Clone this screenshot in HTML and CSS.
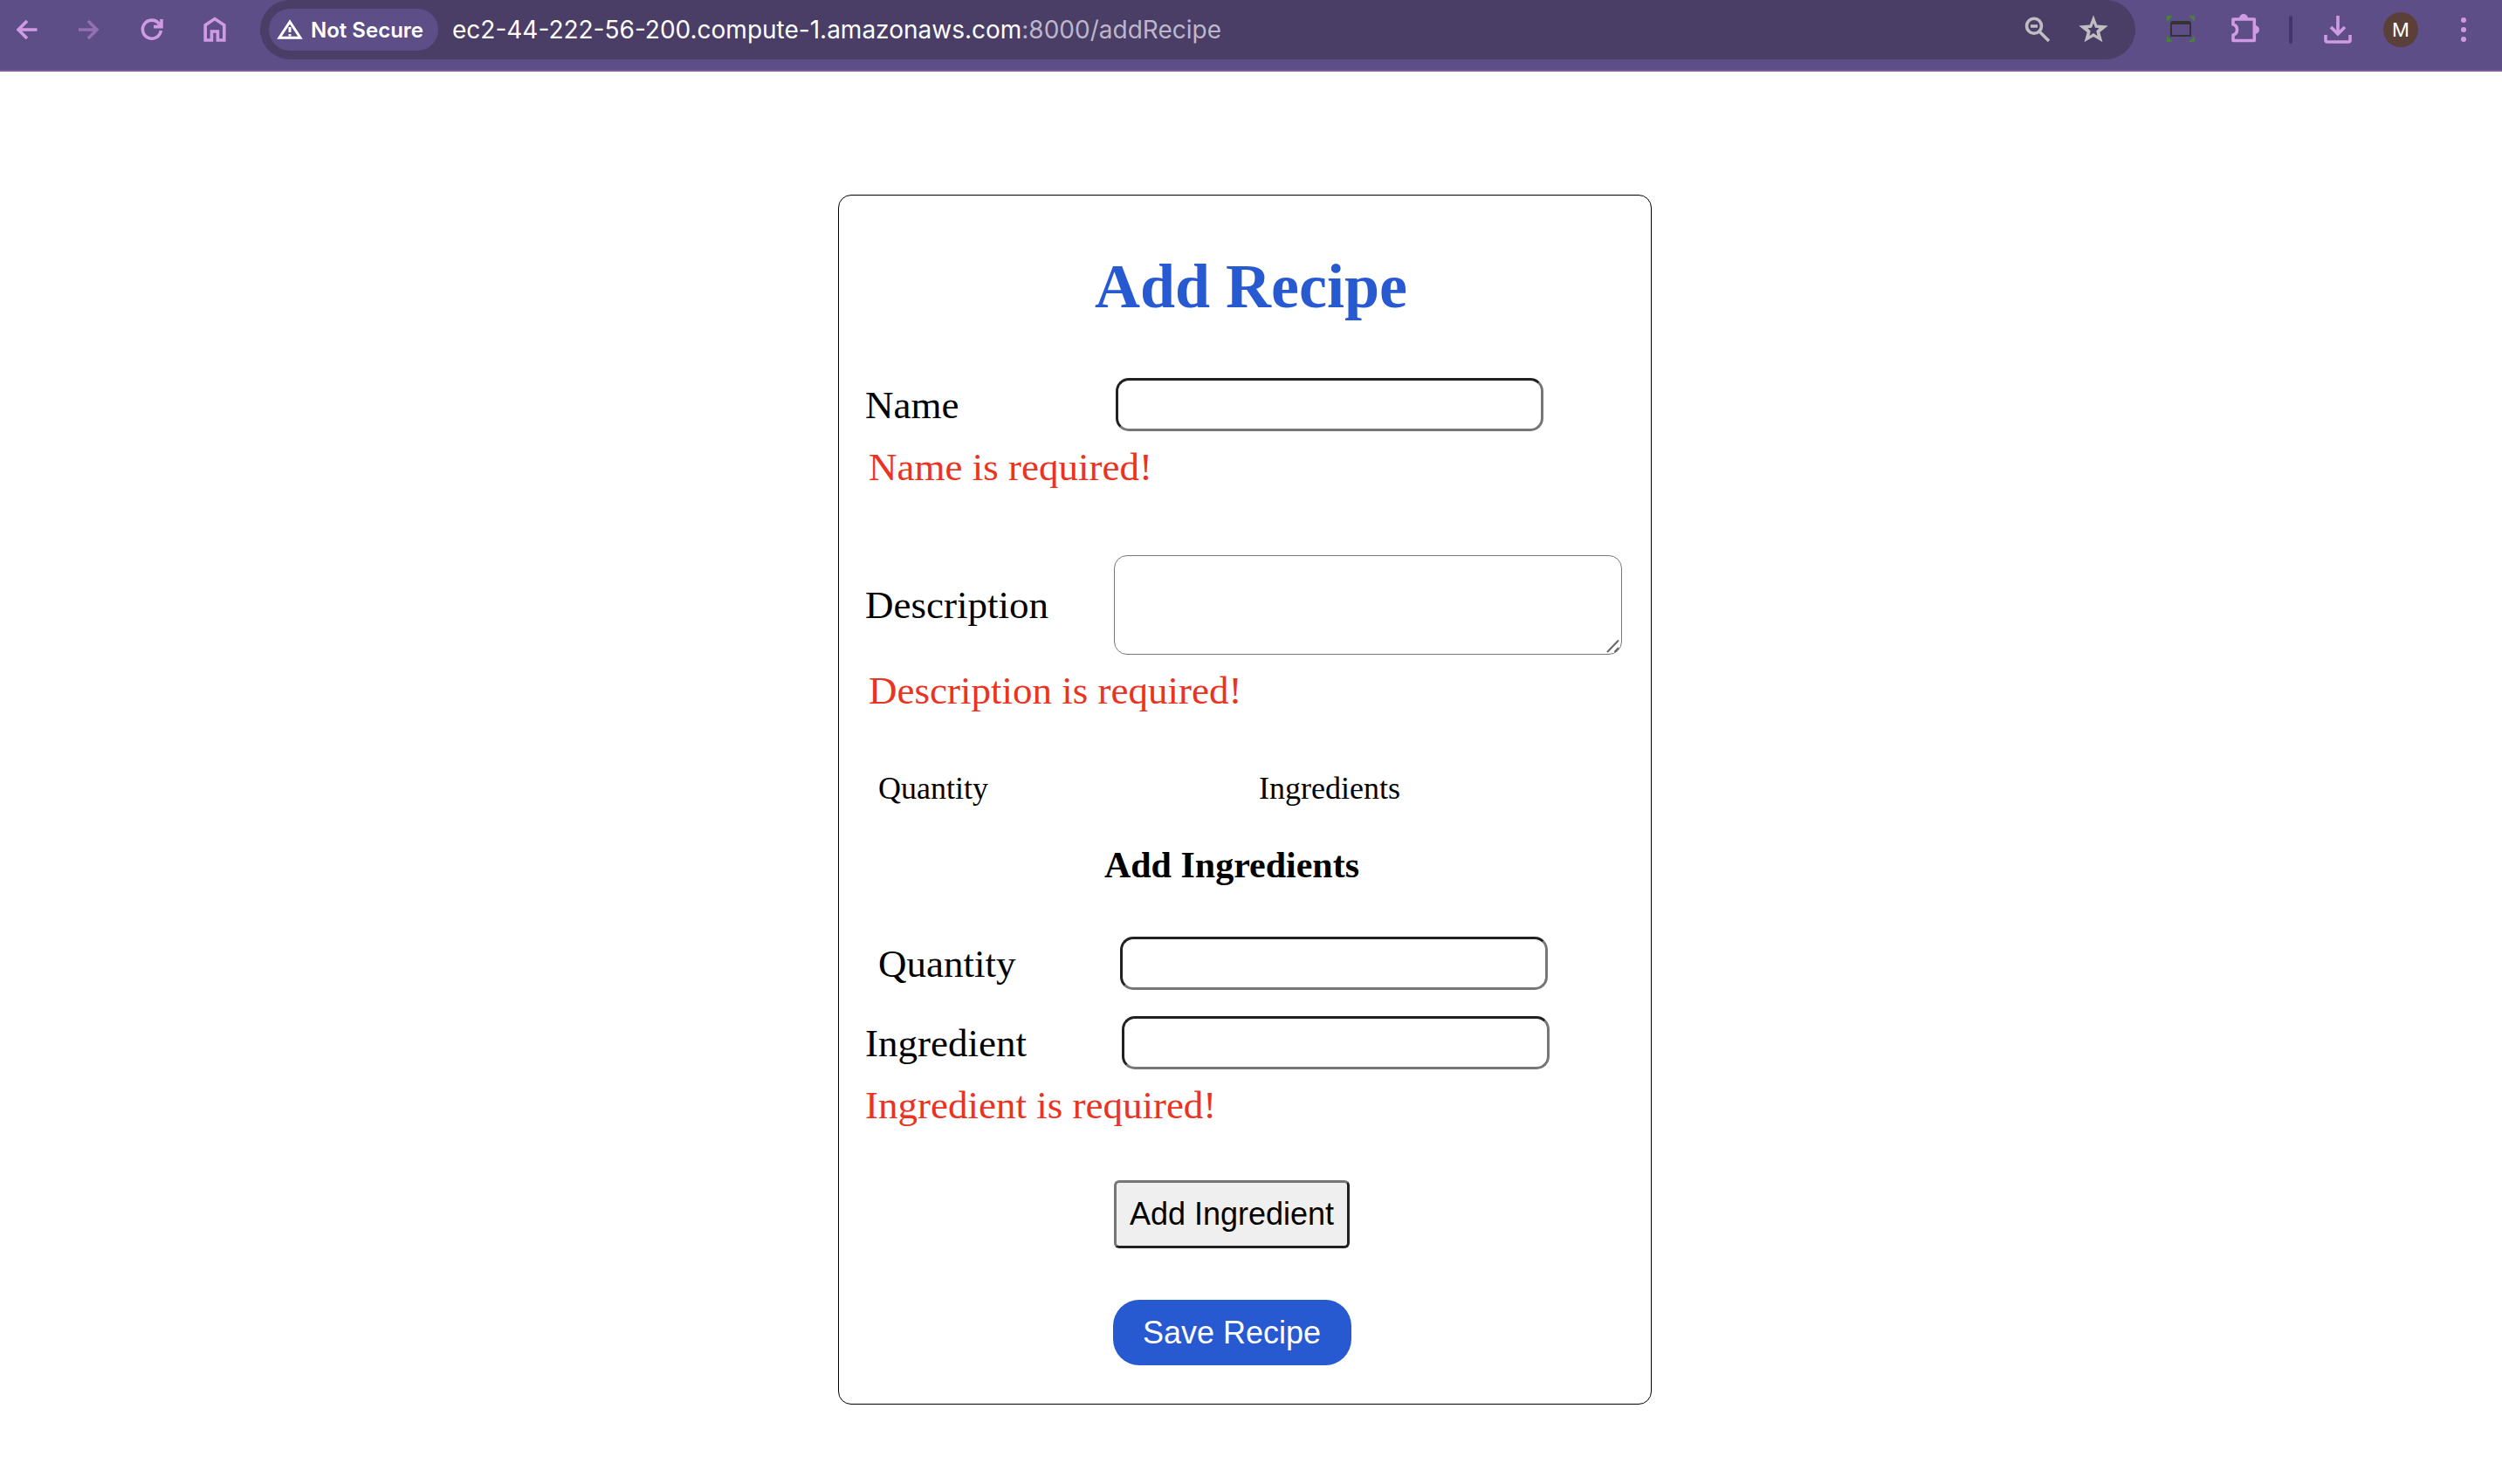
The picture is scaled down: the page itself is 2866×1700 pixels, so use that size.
FILE: index.html
```html
<!DOCTYPE html>
<html lang="en">
<head>
<meta charset="utf-8">
<title>Add Recipe</title>
<link rel="stylesheet" href="styles.css">
</head>
<body>
<header class="toolbar">
  <nav class="nav" aria-label="Browser navigation">
    <button class="icon-btn" aria-label="Back"><svg viewBox="0 0 32 32"><path d="M28.500 16H7M17 6L7 16l10 10"/></svg></button>
    <button class="icon-btn dim" aria-label="Forward"><svg viewBox="0 0 32 32"><path d="M4 16h21M15 6l10 10-10 10"/></svg></button>
    <button class="icon-btn" aria-label="Reload"><svg viewBox="0 0 32 32"><path d="M26.300 17A10.500 10.500 0 1 1 24 9M27 4v8.600H18"/><path class="solid" d="M27 6v7h-7z"/></svg></button>
    <button class="icon-btn" aria-label="Home"><svg viewBox="0 0 32 32"><path d="M5.200 28V10.800L16 3.600l10.800 7.200V28h-7.400V18h-6.900v10z"/></svg></button>
  </nav>
  <div class="address">
    <button class="chip"><svg viewBox="0 0 32 28"><path d="M16 5L4 23.300h24z"/><path d="M16 11v6M16 19v2.500"/></svg>Not Secure</button>
    <a class="url" href="#">ec2-44-222-56-200.compute-1.amazonaws.com<span class="path">:8000/addRecipe</span></a>
    <button class="icon-btn grey" aria-label="Zoom"><svg viewBox="0 0 32 32"><circle cx="12" cy="11.700" r="8.500"/><path d="M18 18l11 11M8 12h8"/></svg></button>
    <button class="icon-btn grey" aria-label="Bookmark"><svg viewBox="0 0 32 32"><path class="solid" fill-rule="evenodd" d="M16-.7l4.200 11.200 12.500 1.100L23.300 19l3.200 11.300L16 24 5.500 30.300 8.700 19-.7 11.600l12.500-1.100zM16 8.500l-2 5.200-4.500.5 3.200 3.300L11.500 23l4.500-3 4.500 3-1.200-5.500 3.200-3.300-4.500-.5z"/></svg></button>
  </div>
  <div class="tools">
    <button class="icon-btn" aria-label="Capture"><svg viewBox="0 0 32 32"><path class="corner" d="M0 0h7L0 7zM32 0h-7l7 7zM0 30h7l-7-7zM32 30h-7l7-7z"/><path class="frame" fill-rule="evenodd" d="M6 6h20l2 2v16H4V8zM6 10v12h20V10z"/></svg></button>
    <button class="icon-btn" aria-label="Extensions"><svg viewBox="0 0 32 32"><path stroke-linejoin="round" d="M2 10V4h24.300v24.500H2V22q4.500-1 4.500-6T2 10z"/><path class="solid" d="M9 3a5 5 0 0 1 10 0zM27 11a5 5 0 0 1 0 10z"/></svg></button>
    <span class="divider"></span>
    <button class="icon-btn" aria-label="Downloads"><svg viewBox="0 0 32 32"><path d="M16 0v21M8 13l8 8 8-8M2 22v6q0 2 2 2h24q2 0 2-2v-6"/></svg></button>
    <button class="avatar" aria-label="Profile M">M</button>
    <button class="icon-btn" aria-label="Menu"><svg viewBox="0 0 32 32"><g class="solid"><circle cx="16" cy="5" r="3"/><circle cx="16" cy="16" r="3"/><circle cx="16" cy="27" r="3"/></g></svg></button>
  </div>
</header>
<main class="page">
  <form class="card" novalidate>
    <h1>Add Recipe</h1>
    <div class="row">
      <label for="name">Name</label>
      <input id="name" type="text">
    </div>
    <p class="error">Name is required!</p>
    <div class="row row-desc">
      <label for="description">Description</label>
      <div class="area">
        <textarea id="description"></textarea>
        <svg class="grip" viewBox="0 0 18 18" aria-hidden="true"><path d="M1 15L14 1.500M9.500 15l4.500-5"/></svg>
      </div>
    </div>
    <p class="error">Description is required!</p>
    <table class="list">
      <thead><tr><th scope="col">Quantity</th><th scope="col">Ingredients</th></tr></thead>
    </table>
    <h2>Add Ingredients</h2>
    <div class="row inset">
      <label for="quantity">Quantity</label>
      <input id="quantity" type="text">
    </div>
    <div class="row inset-field">
      <label for="ingredient">Ingredient</label>
      <input id="ingredient" type="text">
    </div>
    <p class="error flush">Ingredient is required!</p>
    <div class="actions">
      <button type="button" class="add">Add Ingredient</button>
      <button type="button" class="save">Save Recipe</button>
    </div>
  </form>
</main>
</body>
</html>
```
FILE: styles.css
```css
* { box-sizing: border-box; }

body {
  margin: 0;
  background: #fff;
  color: #000;
  font-family: "Liberation Serif", "Times New Roman", serif;
}

button { font: inherit; cursor: pointer; }

/* Browser toolbar */
.toolbar {
  display: flex;
  align-items: flex-start;
  height: 82px;
  padding-left: 14px;
  background: #5d4e87;
  border-bottom: 2px solid #7d5ba0;
  font-family: Inter, sans-serif;
}

.nav, .tools { display: flex; align-items: center; height: 68px; }
.nav { gap: 40px; width: 284px; }

.icon-btn {
  flex: none;
  width: 32px;
  height: 32px;
  padding: 0;
  border: 0;
  background: none;
  color: #d09be4;
}
.icon-btn svg, .chip svg {
  display: block;
  fill: none;
  stroke: currentColor;
  stroke-width: 3.6;
}
.icon-btn svg { width: 32px; height: 32px; overflow: visible; }
.dim { color: #9370b3; }
.grey { color: #c0bec2; }
.icon-btn .solid { fill: currentColor; stroke: none; }
.icon-btn .corner { fill: #488334; stroke: none; }
.icon-btn .frame { fill: #333; stroke: none; }

.address {
  flex: 1;
  display: flex;
  align-items: center;
  height: 68px;
  padding: 0 32px 0 10px;
  border-radius: 34px;
  background: #4a3d66;
}
.chip {
  display: flex;
  align-items: center;
  gap: 8px;
  width: 194px;
  height: 48px;
  padding: 0 0 0 8px;
  border: 0;
  border-radius: 24px;
  background: #5d4e87;
  color: #fff;
  font-size: 24px;
  font-weight: 600;
  white-space: nowrap;
}
.chip svg { width: 32px; height: 28px; stroke-width: 3; }
.url {
  flex: 1;
  margin-left: 16px;
  color: #fff;
  font-size: 28px;
  text-decoration: none;
}
.path { color: #bdb6cb; }
.address .grey + .grey { margin-left: 32px; }

.tools { width: 420px; padding-left: 36px; }
.tools .icon-btn + .icon-btn { margin-left: 42px; }
.divider { width: 4px; height: 32px; margin: 0 36px 0 34px; border-radius: 2px; background: #44336c; }
.avatar {
  width: 40px;
  height: 40px;
  margin: 0 36px;
  padding: 0;
  border: 0;
  border-radius: 50%;
  background: #5a4038;
  color: #fff;
  font-size: 22px;
}

/* Recipe form */
.page { padding: 141px 14px 92px 0; }

.card {
  width: 932px;
  max-width: 100%;
  margin: 0 auto;
  padding: 62px 16px 44px 30px;
  border: 1px solid #000;
  border-radius: 15px;
  font-size: 45px;
  line-height: 52px;
}

h1 {
  margin: 0 0 63px;
  color: #2759d1;
  font-size: 72px;
  line-height: 84px;
  text-align: center;
}

.row { display: flex; align-items: center; margin-bottom: 15px; }
.row label { flex: none; width: 287px; }

input[type="text"], textarea {
  margin: 0;
  border-radius: 15px;
  background: #fff;
  font-size: 36px;
}
input[type="text"] {
  width: 490px;
  height: 61px;
  padding: 4px 12px;
  border: 3px inset #767676;
}
.row-desc { margin-top: 75px; }
.row-desc label { width: 285px; }
.area { position: relative; }
textarea {
  display: block;
  width: 582px;
  height: 114px;
  padding: 4px;
  border: 1px solid #767676;
}
textarea::-webkit-resizer { background: transparent; }
.grip {
  position: absolute;
  right: 0;
  bottom: 0;
  width: 18px;
  height: 18px;
  stroke: #666;
  stroke-width: 2;
  pointer-events: none;
}

.error { margin: 0; padding-left: 4px; color: #ea3323; }
.flush { padding-left: 0; }

.list {
  width: 100%;
  margin: 65px 0 43px;
  border-spacing: 0;
  font-size: 36px;
  line-height: 42px;
}
.list th { padding: 0 0 0 15px; font-weight: 400; text-align: left; }
.list th:first-child { width: 436px; }

h2 {
  margin: 0 44px 58px 0;
  font-size: 42px;
  line-height: 48px;
  text-align: center;
}

.inset { margin-bottom: 30px; padding-left: 15px; }
.inset label { width: 277px; }
.inset-field label { width: 294px; }

.actions {
  display: flex;
  flex-direction: column;
  align-items: center;
  gap: 59px;
  margin: 60px 44px 0 0;
}
.add, .save {
  font-family: "Liberation Sans", Arial, sans-serif;
  font-size: 36px;
}
.add {
  width: 270px;
  height: 78px;
  padding: 0;
  border: 3px outset #767676;
  border-radius: 6px;
  background: #efefef;
  color: #000;
}
.save {
  width: 273px;
  height: 75px;
  padding: 0;
  border: 0;
  border-radius: 30px;
  background: #2759d1;
  color: #fff;
}
```
